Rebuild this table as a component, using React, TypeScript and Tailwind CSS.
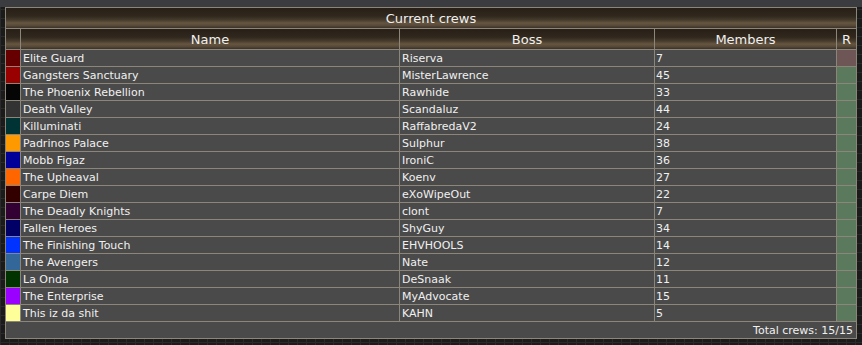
import React from 'react'

interface Crew {
  name: string
  boss: string
  members: number
  color: string
  r: string
}

const crews: Crew[] = [
  { name: 'Elite Guard', boss: 'Riserva', members: 7, color: 'bg-[#660000]', r: 'bg-[#6f5656]' },
  { name: 'Gangsters Sanctuary', boss: 'MisterLawrence', members: 45, color: 'bg-[#990000]', r: 'bg-[#5b7a5d]' },
  { name: 'The Phoenix Rebellion', boss: 'Rawhide', members: 33, color: 'bg-[#050505]', r: 'bg-[#5b7a5d]' },
  { name: 'Death Valley', boss: 'Scandaluz', members: 44, color: 'bg-[#333333]', r: 'bg-[#5b7a5d]' },
  { name: 'Killuminati', boss: 'RaffabredaV2', members: 24, color: 'bg-[#003333]', r: 'bg-[#5b7a5d]' },
  { name: 'Padrinos Palace', boss: 'Sulphur', members: 38, color: 'bg-[#ff9900]', r: 'bg-[#5b7a5d]' },
  { name: 'Mobb Figaz', boss: 'IroniC', members: 36, color: 'bg-[#000099]', r: 'bg-[#5b7a5d]' },
  { name: 'The Upheaval', boss: 'Koenv', members: 27, color: 'bg-[#ff6600]', r: 'bg-[#5b7a5d]' },
  { name: 'Carpe Diem', boss: 'eXoWipeOut', members: 22, color: 'bg-[#330000]', r: 'bg-[#5b7a5d]' },
  { name: 'The Deadly Knights', boss: 'clont', members: 7, color: 'bg-[#330033]', r: 'bg-[#5b7a5d]' },
  { name: 'Fallen Heroes', boss: 'ShyGuy', members: 34, color: 'bg-[#000066]', r: 'bg-[#5b7a5d]' },
  { name: 'The Finishing Touch', boss: 'EHVHOOLS', members: 14, color: 'bg-[#0033ff]', r: 'bg-[#5b7a5d]' },
  { name: 'The Avengers', boss: 'Nate', members: 12, color: 'bg-[#336699]', r: 'bg-[#5b7a5d]' },
  { name: 'La Onda', boss: 'DeSnaak', members: 11, color: 'bg-[#003300]', r: 'bg-[#5b7a5d]' },
  { name: 'The Enterprise', boss: 'MyAdvocate', members: 15, color: 'bg-[#9900ff]', r: 'bg-[#5b7a5d]' },
  { name: 'This iz da shit', boss: 'KAHN', members: 5, color: 'bg-[#ffff99]', r: 'bg-[#5b7a5d]' },
]

const texture =
  'bg-[linear-gradient(to_bottom,#282017_0%,#30281d_40%,#463b2d_60%,#66563f_75%,#57493a_88%,#3a3126_100%)]'

export default function App() {
  return (
    <div
      className="w-[862px] h-[345px] pt-[7px] pl-[5px] bg-[#1b1b1b] bg-[linear-gradient(to_bottom,#3a3c3f_0,#3a3c3f_7px,transparent_7px),linear-gradient(to_right,#2a2a2a_1px,transparent_1px),linear-gradient(to_bottom,#2a2a2a_1px,transparent_1px)] bg-size-[100%_100%,9px_9px,9px_9px] text-[#f0f0f0]"
      style={{ fontFamily: '"DejaVu Sans", Verdana, sans-serif' }}
    >
      <div className="w-[852px] border border-[#8c857a] bg-[#4a4a4a]">
        <div className={`h-[21px] border-b border-[#8c857a] text-center text-[13px] leading-[22px] ${texture}`}>
          Current crews
        </div>

        <div className={`flex h-[21px] border-b border-[#8c857a] text-[13px] leading-[22px] ${texture}`}>
          <div className="w-[14px]" />
          <div className="w-[379px] border-l border-[#8c857a] text-center">Name</div>
          <div className="w-[255px] border-l border-[#8c857a] text-center">Boss</div>
          <div className="w-[182px] border-l border-[#8c857a] text-center">Members</div>
          <div className="flex-1 border-l border-[#8c857a] text-center">R</div>
        </div>

        {crews.map((c) => (
          <div key={c.name} className="flex h-[17px] border-b border-[#8c857a] text-[11px] leading-[18px]">
            <div className={`w-[14px] ${c.color}`} />
            <div className="w-[379px] border-l border-[#8c857a] pl-[2px] whitespace-nowrap">{c.name}</div>
            <div className="w-[255px] border-l border-[#8c857a] pl-[2px] whitespace-nowrap">{c.boss}</div>
            <div className="w-[182px] border-l border-[#8c857a] pl-[1px]">{c.members}</div>
            <div className={`flex-1 border-l border-[#8c857a] ${c.r}`} />
          </div>
        ))}

        <div className="h-[16px] pr-[3px] text-right text-[11px] leading-[18px]">Total crews: 15/15</div>
      </div>
    </div>
  )
}
